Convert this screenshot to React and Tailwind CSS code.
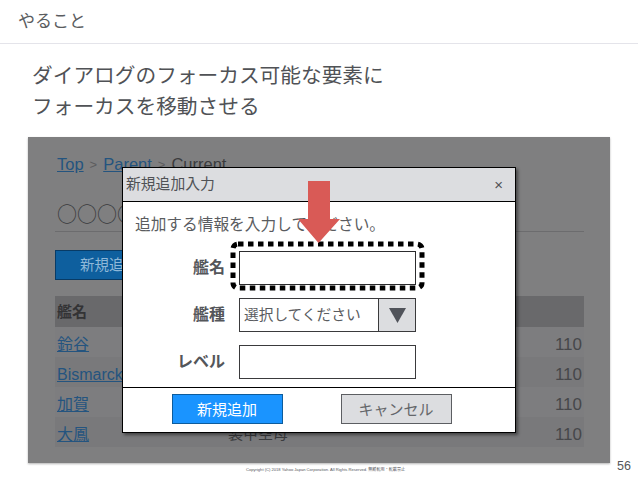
import React from 'react';

const FONT = "font-['Liberation_Sans','Noto_Sans_CJK_JP',sans-serif]";

const ROWS = [
  { name: '鈴谷', type: '航空巡洋艦', band: 'bg-[#7d7d7f]' },
  { name: 'Bismarck', type: '戦艦', band: 'bg-[#79797b]' },
  { name: '加賀', type: '正規空母', band: 'bg-[#7d7d7f]' },
  { name: '大鳳', type: '装甲空母', band: 'bg-[#79797b]' },
];

function FieldRow({ label, className, children }) {
  return (
    <div className={`flex items-center ${className}`}>
      <label className="w-[102px] text-right text-[16px] font-bold text-[#54565a] leading-none">{label}</label>
      <div className="ml-[14px]">{children}</div>
    </div>
  );
}

function BackgroundPage() {
  return (
    <div className="h-[326px] mx-[28px] bg-[#7f7f80] shadow-[0_1px_2px_rgba(0,0,0,0.3)] pl-[27px] pr-[26px] pt-[17px] text-[#3a3b3d]">
      <div className="h-[20px] pl-[2px] flex items-center gap-[6px] text-[16.5px] leading-none">
        <span className="text-[#24547f] underline">Top</span>
        <span className="text-[#5c5c5e] text-[13px]">&gt;</span>
        <span className="text-[#24547f] underline">Parent</span>
        <span className="text-[#5c5c5e] text-[13px]">&gt;</span>
        <span>Current</span>
      </div>
      <div className="mt-[22px] h-[36px] border-b border-[#6c6c6e] pl-[2px] font-['Noto_Sans_CJK_JP',sans-serif] text-[20px] leading-[35px]">○○○○○○○○</div>
      <div className="mt-[18px] w-[110px] h-[30px] bg-[#0e5f9e] border border-[#083b66] pl-[24px] text-[14.5px] leading-[28px] text-[#8fb8d8]">新規追加</div>
      <div className="mt-[16px] h-[31px] bg-[#69696b] pl-[2px] text-[15px] font-bold leading-[31px] text-[#333335]">艦名</div>
      {ROWS.map((row) => (
        <div key={row.name} className={`h-[30px] flex items-center justify-between px-[2px] pt-[5px] text-[16px] ${row.band}`}>
          <div className="flex items-center">
            <span className="w-[171px] text-[#24547f] underline">{row.name}</span>
            <span className="text-[15px]">{row.type}</span>
          </div>
          <span className="text-[#46474a] text-[17px]">110</span>
        </div>
      ))}
    </div>
  );
}

function FocusRing() {
  return (
    <svg className="absolute -left-[10px] -top-[11px]" width="197" height="54" viewBox="0 0 197 54">
      <rect x="4" y="4" width="189" height="44" rx="5" fill="none" stroke="#000" strokeWidth="5" strokeDasharray="5.5 4.5" />
    </svg>
  );
}

function Dialog() {
  return (
    <div className="absolute left-[122px] top-[167px] w-[394px] h-[266px] bg-white border-[1.5px] border-black shadow-[2px_2px_3px_rgba(0,0,0,0.45)] flex flex-col">
      <div className="h-[34px] shrink-0 bg-[#dcdde0] border-b-[1.5px] border-black flex items-center justify-between pl-[3px] pr-[12px] text-[14.8px] text-[#505256]">
        <span>新規追加入力</span>
        <span className="text-[15px] leading-none">×</span>
      </div>
      <p className="mt-[12px] ml-[12px] text-[15.7px] leading-[22px] text-[#5a5c60]">追加する情報を入力してください。</p>
      <FieldRow label="艦名" className="mt-[15px]">
        <div className="relative w-[177px] h-[34px]">
          <FocusRing />
          <div className="h-full border-[1.5px] border-[#2c2c2e] bg-white" />
        </div>
      </FieldRow>
      <FieldRow label="艦種" className="mt-[13px]">
        <div className="w-[177px] h-[34px] border-[1.5px] border-[#3a3a3c] bg-white flex items-center">
          <span className="flex-1 pl-[4px] text-[14.7px] text-[#5a5c60] leading-none">選択してください</span>
          <div className="w-[37px] h-full bg-[#dcdde0] border-l-[1.5px] border-[#3a3a3c] flex items-center justify-center">
            <svg width="17" height="15" viewBox="0 0 17 15">
              <path d="M0 0H17L8.5 15Z" fill="#50535a" />
            </svg>
          </div>
        </div>
      </FieldRow>
      <FieldRow label="レベル" className="mt-[13px]">
        <div className="w-[177px] h-[34px] border-[1.5px] border-[#3a3a3c] bg-white" />
      </FieldRow>
      <div className="mt-[8px] border-t-[1.5px] border-black flex-1 flex items-start pt-[6px] pl-[48.5px] gap-[58px]">
        <button className="w-[111px] h-[30px] bg-[#1a94ff] border border-[#0d5c9c] text-[15px] text-white leading-none">新規追加</button>
        <button className="w-[111px] h-[30px] bg-[#dcdde0] border border-[#5c5e62] text-[15px] text-[#65676b] leading-none">キャンセル</button>
      </div>
    </div>
  );
}

function ArrowMark() {
  return (
    <svg className="absolute left-[298px] top-[181px]" width="44" height="62" viewBox="0 0 44 62">
      <path d="M10 0H32V38H42L20.5 62L0 38H10Z" fill="#d95a56" />
    </svg>
  );
}

export default function App() {
  return (
    <div className={`relative w-[638px] h-[479px] overflow-hidden bg-white ${FONT}`}>
      <header className="h-[44px] border-b border-[#e4e4ea] pl-[18px] text-[17px] leading-[43px] text-[#5a5c60]">やること</header>
      <h1 className="mt-[16px] ml-[32px] text-[20.7px] leading-[31px] font-normal text-[#505256]">
        ダイアログのフォーカス可能な要素に<br />フォーカスを移動させる
      </h1>
      <div className="mt-[15px]">
        <BackgroundPage />
      </div>
      <Dialog />
      <ArrowMark />
      <footer className="relative h-[16px]">
        <div className="absolute left-[246px] top-[3px] text-[4.1px] leading-[8px] text-[#55575c] whitespace-nowrap">Copyright (C) 2018 Yahoo Japan Corporation. All Rights Reserved. 無断転用・転載禁止</div>
        <div className="absolute right-[7px] top-[-4px] text-[12.5px] leading-[14px] text-[#55575c]">56</div>
      </footer>
    </div>
  );
}
